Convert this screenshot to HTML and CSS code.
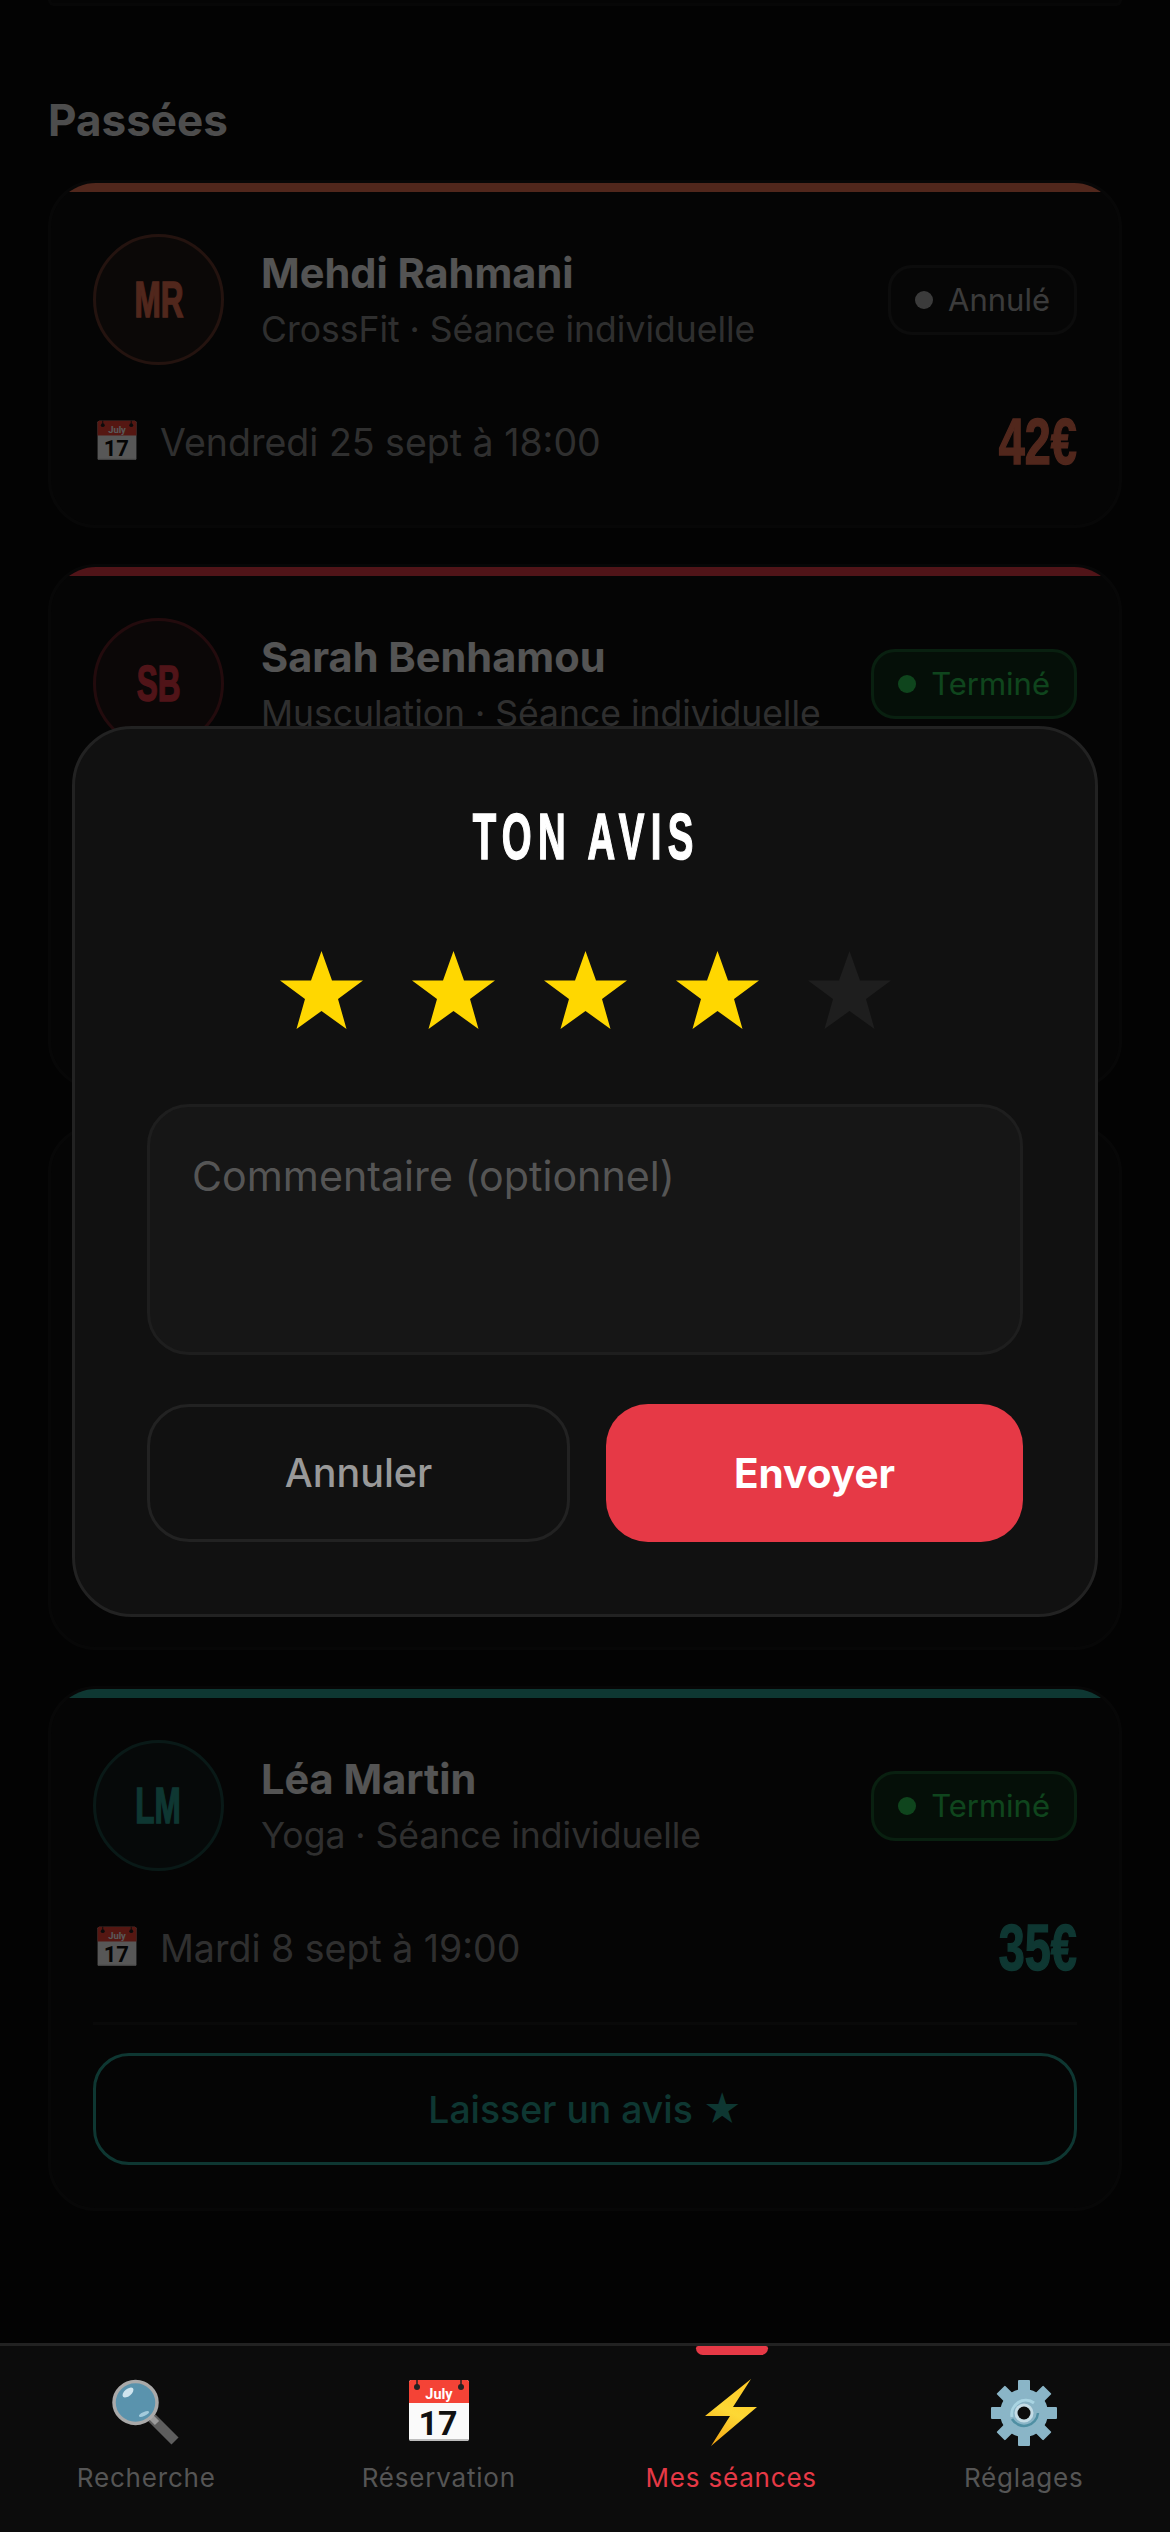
FILE: index.html
```html
<!DOCTYPE html>
<html lang="fr">
<head>
<meta charset="utf-8">
<title>Mes séances</title>
<link rel="stylesheet" href="styles.css">
</head>
<body>
<svg class="defs" width="0" height="0" aria-hidden="true">
  <defs>
    <symbol id="i-cal" viewBox="0 0 68 68">
      <rect x="4" y="1" width="60" height="61" rx="2.5" fill="#fafafa"/>
      <path d="M4 60h60v0a2.500 2.500 0 0 1-2.500 2h-55a2.500 2.500 0 0 1-2.500-2z" fill="#bdbdbd"/>
      <path d="M4 24V3.500A2.500 2.500 0 0 1 6.500 1h55A2.500 2.500 0 0 1 64 3.500V24z" fill="#f44336"/>
      <path d="M12 1v7M56 1v7" stroke="#222" stroke-width="1.500"/>
      <circle cx="12" cy="8" r="3" fill="#222"/>
      <circle cx="56" cy="8" r="3" fill="#222"/>
      <text x="34" y="19.500" text-anchor="middle" class="cal-month">July</text>
      <text x="33" y="56" text-anchor="middle" class="cal-day">17</text>
    </symbol>
  </defs>
</svg>

<div class="app">
  <main class="stage">
    <div class="feed">
      <div class="stub"></div>
      <h2 class="section-title">Passées</h2>

      <article class="card card-orange">
        <div class="stripe"></div>
        <div class="card-body">
          <div class="head">
            <div class="avatar"><span class="display">MR</span></div>
            <div class="info">
              <div class="name">Mehdi Rahmani</div>
              <div class="sub">CrossFit · Séance individuelle</div>
            </div>
            <div class="badge badge-off"><i class="dot"></i>Annulé</div>
          </div>
          <div class="when">
            <svg class="when-icon"><use href="#i-cal"/></svg>
            <span class="when-text">Vendredi 25 sept à 18:00</span>
            <span class="price display">42€</span>
          </div>
        </div>
      </article>

      <article class="card card-red card-tall">
        <div class="stripe"></div>
        <div class="card-body">
          <div class="head">
            <div class="avatar"><span class="display">SB</span></div>
            <div class="info">
              <div class="name">Sarah Benhamou</div>
              <div class="sub">Musculation · Séance individuelle</div>
            </div>
            <div class="badge badge-done"><i class="dot"></i>Terminé</div>
          </div>
        </div>
      </article>

      <article class="card card-tall"></article>

      <article class="card card-teal card-tall">
        <div class="stripe"></div>
        <div class="card-body">
          <div class="head">
            <div class="avatar"><span class="display">LM</span></div>
            <div class="info">
              <div class="name">Léa Martin</div>
              <div class="sub">Yoga · Séance individuelle</div>
            </div>
            <div class="badge badge-done"><i class="dot"></i>Terminé</div>
          </div>
          <div class="when">
            <svg class="when-icon"><use href="#i-cal"/></svg>
            <span class="when-text">Mardi 8 sept à 19:00</span>
            <span class="price display">35€</span>
          </div>
          <div class="review-wrap">
            <button class="review-btn" type="button">Laisser un avis ★</button>
          </div>
        </div>
      </article>
    </div>

    <div class="overlay">
      <section class="modal">
        <h3 class="modal-title display">TON AVIS</h3>
        <div class="stars">
          <svg class="star on" viewBox="0 0 83 78"><polygon points="41.500,0 52,29.500 83,29.500 58,48 66.500,78 41.500,60 16.500,78 25,48 0,29.500 31,29.500"/></svg>
          <svg class="star on" viewBox="0 0 83 78"><polygon points="41.500,0 52,29.500 83,29.500 58,48 66.500,78 41.500,60 16.500,78 25,48 0,29.500 31,29.500"/></svg>
          <svg class="star on" viewBox="0 0 83 78"><polygon points="41.500,0 52,29.500 83,29.500 58,48 66.500,78 41.500,60 16.500,78 25,48 0,29.500 31,29.500"/></svg>
          <svg class="star on" viewBox="0 0 83 78"><polygon points="41.500,0 52,29.500 83,29.500 58,48 66.500,78 41.500,60 16.500,78 25,48 0,29.500 31,29.500"/></svg>
          <svg class="star" viewBox="0 0 83 78"><polygon points="41.500,0 52,29.500 83,29.500 58,48 66.500,78 41.500,60 16.500,78 25,48 0,29.500 31,29.500"/></svg>
        </div>
        <div class="field">Commentaire (optionnel)</div>
        <div class="actions">
          <button class="btn btn-cancel" type="button">Annuler</button>
          <button class="btn btn-send" type="button">Envoyer</button>
        </div>
      </section>
    </div>
  </main>

  <nav class="tabbar">
    <div class="tab">
      <svg class="tab-icon" viewBox="0 0 68 68">
        <path d="M40 39L63 62" stroke="#5e5e5e" stroke-width="10" stroke-linecap="butt"/>
        <path d="M38 37L45 44" stroke="#9a9a9a" stroke-width="6"/>
        <ellipse cx="23.500" cy="23.500" rx="21.500" ry="21" fill="#5a93ad" stroke="#a9a9a9" stroke-width="3.500"/>
        <ellipse cx="16" cy="13.500" rx="6.500" ry="3.500" fill="#cfe4ee" transform="rotate(-40 16 13.500)"/>
        <ellipse cx="32" cy="35" rx="5.500" ry="1.800" fill="#a4cbdc" transform="rotate(-25 32 35)"/>
      </svg>
      <span class="tab-label">Recherche</span>
    </div>
    <div class="tab">
      <svg class="tab-icon"><use href="#i-cal"/></svg>
      <span class="tab-label">Réservation</span>
    </div>
    <div class="tab tab-active">
      <svg class="tab-icon" viewBox="0 0 68 68">
        <defs>
          <linearGradient id="bolt" x1="0.700" y1="0" x2="0.300" y2="1">
            <stop offset="0" stop-color="#ffc928"/>
            <stop offset="0.500" stop-color="#fdd835"/>
            <stop offset="1" stop-color="#f5a915"/>
          </linearGradient>
        </defs>
        <polygon points="54,0 8,37 33,37 14,67 60,28 36,28" fill="url(#bolt)"/>
      </svg>
      <span class="tab-label">Mes séances</span>
    </div>
    <div class="tab">
      <svg class="tab-icon" viewBox="0 0 68 68">
        <g fill="#8ab5c7">
          <circle cx="34" cy="34" r="24"/>
          <rect x="28" y="1" width="12" height="66" rx="1"/>
          <rect x="28" y="1" width="12" height="66" rx="1" transform="rotate(45 34 34)"/>
          <rect x="28" y="1" width="12" height="66" rx="1" transform="rotate(90 34 34)"/>
          <rect x="28" y="1" width="12" height="66" rx="1" transform="rotate(135 34 34)"/>
        </g>
        <circle cx="34" cy="34" r="14" fill="#8ab5c7"/>
        <path d="M22 40a14 14 0 0 0 26-6" fill="none" stroke="#4f8fa3" stroke-width="2.500"/>
        <path d="M44 24a14 14 0 0 0-22 14" fill="none" stroke="#a9d4e2" stroke-width="3"/>
        <circle cx="34" cy="34" r="9.500" fill="#c4dce6"/>
        <circle cx="34" cy="34" r="6.500" fill="#0c0c0c"/>
      </svg>
      <span class="tab-label">Réglages</span>
    </div>
  </nav>
</div>
</body>
</html>
```
FILE: styles.css
```css
* { box-sizing: border-box; }
html, body { margin: 0; padding: 0; background: #0a0a0a; }
body { font-family: "Inter", "Liberation Sans", sans-serif; color: #f0f0f0; }
.defs { position: absolute; }
.cal-month { font: 700 14.5px "Roboto", sans-serif; fill: #fff; }
.cal-day { font: 700 34px "Roboto", sans-serif; fill: #111; }

/* No narrow display face is installed: bold grotesque squeezed to the condensed proportions. */
.display { display: inline-block; font-family: "Liberation Sans", sans-serif; font-weight: 700; transform: scaleX(.63); -webkit-text-stroke: 1.5px currentColor; }

.app { width: 1170px; height: 2532px; display: flex; flex-direction: column; overflow: hidden; }
.stage { position: relative; height: 2343px; overflow: hidden; flex: none; }
.feed { padding: 0 48px; }
.stub { height: 6px; border: 3px solid #161616; border-top: 0; border-radius: 0 0 48px 48px; background: #0f0f0f; }
.section-title { margin: 84px 0 30px; font-size: 44px; line-height: 60px; font-weight: 700; color: #ddd; }

.card { border: 3px solid #161616; border-radius: 48px; background: #0f0f0f; overflow: hidden; margin-bottom: 36px; }
.card-tall { height: 525px; }
.stripe { height: 9px; background: var(--accent); }
.card-body { padding: 42px; }
.card-orange { --accent: #e76f51; }
.card-red { --accent: #e63946; }
.card-teal { --accent: #2a9d8f; }

.head { display: flex; align-items: center; gap: 37px; }
.avatar { flex: none; width: 131px; height: 131px; border-radius: 50%; border: 3px solid color-mix(in srgb, var(--accent) 40%, #111); background: color-mix(in srgb, var(--accent) 8%, #111); display: flex; align-items: center; justify-content: center; }
.avatar .display { font-size: 50px; color: var(--accent); }
.info { flex: 1; min-width: 0; }
.name { font-size: 41.5px; line-height: 54px; font-weight: 700; color: #f0f0f0; }
.sub { margin-top: 6px; font-size: 35.5px; line-height: 48px; color: #888; }

.badge { flex: none; display: flex; align-items: center; gap: 15px; height: 70px; padding: 0 24px; border: 3px solid; border-radius: 24px; font-size: 31px; }
.dot { width: 18px; height: 18px; border-radius: 50%; background: currentColor; }
.badge-off { color: #aaa; border-color: #242424; background: #131313; }
.badge-done { color: #2dc653; border-color: #1a5c2e; background: #0f2d18; }

.when { display: flex; align-items: center; height: 82px; margin-top: 36px; }
.when-icon { width: 44px; height: 44px; flex: none; margin-left: 2px; }
.when-text { margin-left: 21px; flex: 1; font-size: 37.5px; color: #888; }
.price { font-size: 64px; color: var(--accent); transform: scaleX(.73); transform-origin: right center; }

.review-wrap { margin-top: 33px; padding-top: 28px; border-top: 3px solid #1c1c1c; }
.review-btn { display: block; width: 100%; height: 112px; border: 3px solid var(--accent); border-radius: 36px; background: transparent; color: var(--accent); font: 500 37.3px "Inter", sans-serif; }

.overlay { position: absolute; inset: 0; background: rgba(0, 0, 0, .65); display: flex; align-items: center; padding: 0 72px; }
.modal { width: 100%; padding: 72px; border: 3px solid #222; border-radius: 60px; background: #111; }
.modal-title { display: block; margin: 0; padding-left: 4px; text-align: center; font-size: 64px; line-height: 73px; letter-spacing: 10.5px; color: #fff; transform: scaleX(.6); }
.stars { display: flex; justify-content: center; gap: 49px; margin-top: 77px; }
.star { width: 83px; height: 78px; fill: #1e1e1e; }
.star.on { fill: #ffd700; }
.field { height: 251px; margin-top: 75px; padding: 45px 42px; border: 3px solid #1e1e1e; border-radius: 42px; background: #161616; font-size: 41.2px; line-height: 48px; color: #555; }
.actions { display: flex; gap: 36px; margin-top: 49px; }
.btn { box-sizing: content-box; flex: 1 1 0; min-width: 0; height: 138px; padding: 0; border-radius: 42px; font-family: "Inter", sans-serif; }
.btn-cancel { height: 132px; border: 3px solid #222; background: transparent; color: #999; font-size: 39.5px; font-weight: 500; }
.btn-send { border: 0; background: #e63946; color: #fff; font-size: 40.5px; font-weight: 700; }

.tabbar { flex: 1; display: grid; grid-template-columns: repeat(4, 1fr); border-top: 3px solid #222; background: #0c0c0c; }
.tab { position: relative; display: flex; flex-direction: column; align-items: center; padding-top: 33px; }
.tab-icon { width: 68px; height: 68px; flex: none; }
.tab-label { margin-top: 13px; font-size: 26px; line-height: 36px; letter-spacing: .8px; color: #555; }
.tab-active .tab-label { color: #e63946; }
.tab-active::before { content: ""; position: absolute; top: 0; left: 50%; width: 72px; height: 9px; margin-left: -35px; border-radius: 3px 3px 9px 9px; background: #e63946; }
```
